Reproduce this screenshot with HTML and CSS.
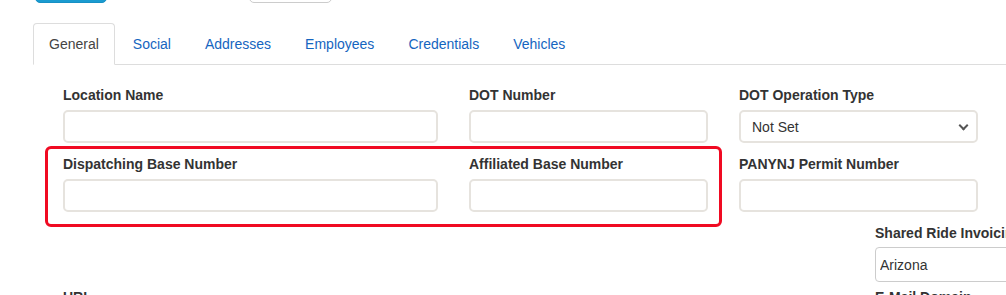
FILE: index.html
```html
<!DOCTYPE html>
<html lang="en">
<head>
  <meta charset="UTF-8" />
  <meta name="viewport" content="width=device-width, initial-scale=1.0"/>
  <title>Location</title>
  <link rel="stylesheet" href="styles.css">
</head>
<body>
  <div class="top-actions">
    <button class="btn-primary" aria-label="Save"></button>
    <button class="btn-default" aria-label="Cancel"></button>
  </div>

  <ul class="tabs">
    <li class="active"><a href="#">General</a></li>
    <li><a href="#">Social</a></li>
    <li><a href="#">Addresses</a></li>
    <li><a href="#">Employees</a></li>
    <li><a href="#">Credentials</a></li>
    <li><a href="#">Vehicles</a></li>
  </ul>

  <div class="tab-content">
    <div class="form-row">
      <div class="field wide">
        <label>Location Name</label>
        <input type="text" />
      </div>
      <div class="field">
        <label>DOT Number</label>
        <input type="text" />
      </div>
      <div class="field">
        <label>DOT Operation Type</label>
        <div class="select-wrap">
          <select>
            <option>Not Set</option>
          </select>
        </div>
      </div>
    </div>

    <div class="form-row row-two">
      <div class="highlight">
        <div class="field wide">
          <label>Dispatching Base Number</label>
          <input type="text" />
        </div>
        <div class="field">
          <label>Affiliated Base Number</label>
          <input type="text" />
        </div>
      </div>
      <div class="field permit">
        <label>PANYNJ Permit Number</label>
        <input type="text" />
      </div>
    </div>

    <div class="form-row row-three">
      <div class="field invoicing">
        <label>Shared Ride Invoicing State</label>
        <input type="text" class="plain" value="Arizona" />
      </div>
    </div>

    <div class="form-row row-four">
      <div class="field wide">
        <label>URL</label>
        <input type="text" />
      </div>
      <div class="field invoicing">
        <label>E-Mail Domain</label>
        <input type="text" />
      </div>
    </div>
  </div>
</body>
</html>
```

FILE: styles.css
```css
html, body {
  overflow: hidden;
}
body {
  margin: 0;
  font-family: "Helvetica Neue", Helvetica, "Liberation Sans", Arial, sans-serif;
  font-size: 14px;
  line-height: 20px;
  color: #333;
  background: #fff;
}
.top-actions {
  display: flex;
  height: 3px;
  padding-left: 35px;
}
.top-actions button {
  height: 34px;
  margin-top: -31px;
  border-radius: 5px;
}
.btn-primary {
  width: 72px;
  background: #1a9bd0;
  border: 1px solid #1690c4;
}
.btn-default {
  width: 83px;
  margin-left: 142px;
  background: #fff;
  border: 1px solid #ccc;
}
.tabs {
  list-style: none;
  margin: 20px 0 0 33px;
  padding: 0;
  display: flex;
  border-bottom: 1px solid #ddd;
}
.tabs li {
  margin-right: 2px;
  margin-bottom: -1px;
}
.tabs a {
  display: block;
  padding: 10px 15px;
  border: 1px solid transparent;
  border-radius: 4px 4px 0 0;
  color: #1565c0;
  text-decoration: none;
}
.tabs .active a {
  color: #444;
  background: #fff;
  border-color: #ddd #ddd transparent;
}
.tab-content {
  padding: 20px 0 0 63px;
}
.form-row {
  display: flex;
  align-items: flex-start;
  gap: 31px;
}
.field {
  width: 239px;
  flex-shrink: 0;
}
.field.wide {
  width: 375px;
}
.field label {
  display: block;
  font-weight: bold;
  margin-bottom: 5px;
}
.field input,
.field select {
  display: block;
  box-sizing: border-box;
  width: 100%;
  height: 33px;
  margin: 0;
  padding: 0 11px;
  border: 2px solid #e6e3de;
  border-radius: 5px;
  background: #fff;
  font-family: inherit;
  font-size: 14px;
  color: #333;
}
.select-wrap {
  position: relative;
}
.field select {
  appearance: none;
  -webkit-appearance: none;
}
.select-wrap::after {
  content: "";
  position: absolute;
  right: 11px;
  top: 12px;
  width: 5px;
  height: 5px;
  border-right: 2px solid #555;
  border-bottom: 2px solid #555;
  transform: rotate(45deg);
  pointer-events: none;
}
.row-two {
  margin-top: 3px;
  gap: 0;
}
.highlight {
  display: flex;
  gap: 31px;
  margin-left: -18px;
  padding: 5px 11px 12px 15px;
  border: 3px solid #f00a22;
  border-radius: 6px;
}
.field.permit {
  margin-left: 17px;
  padding-top: 8px;
}
.row-three {
  margin-top: -4px;
}
.field.invoicing {
  margin-left: 812px;
}
.row-three label {
  margin-bottom: 4px;
}
.field input.plain {
  height: 35px;
  padding: 0 4px;
  border: 1px solid #ccc;
  border-radius: 4px;
}
.row-four {
  margin-top: 5px;
}
.row-four .field.invoicing {
  margin-left: 406px;
}
```
